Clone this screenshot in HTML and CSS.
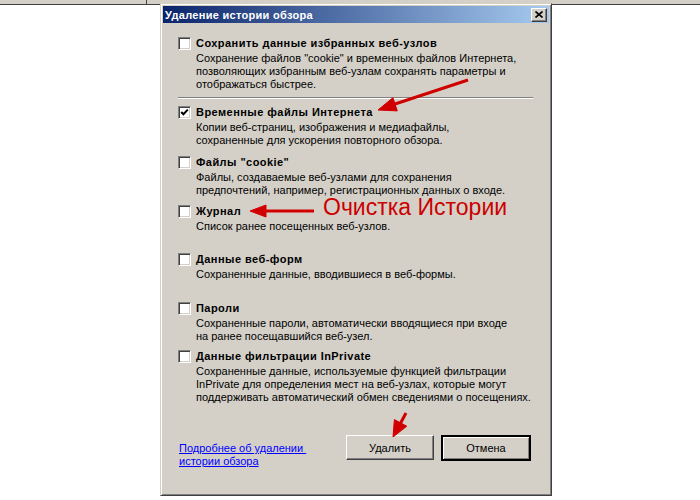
FILE: index.html
```html
<!DOCTYPE html>
<html lang="ru">
<head>
    <meta charset="UTF-8">
    <title>Удаление истории обзора</title>
    <link rel="stylesheet" href="styles.css">
</head>
<body>
    <!-- Browser frame behind the dialog -->
    <div class="topbar"><div class="topbar-cell"></div></div>

    <div class="dialog">
        <div class="titlebar">
            <span class="title">Удаление истории обзора</span>
            <span class="close-btn">
                <svg width="8" height="7" viewBox="0 0 8 7"><path d="M0.5 0.5 L7.5 6.5 M7.5 0.5 L0.5 6.5" stroke="#000" stroke-width="1.6" fill="none"/></svg>
            </span>
        </div>

        <div class="content">
            <div class="item">
                <div class="item-label"><span class="checkbox"></span><span>Сохранить данные избранных веб-узлов</span></div>
                <p class="item-desc">Сохранение файлов "cookie" и временных файлов Интернета,<br>позволяющих избранным веб-узлам сохранять параметры и<br>отображаться быстрее.</p>
            </div>

            <div class="separator"></div>

            <div class="item item-second">
                <div class="item-label"><span class="checkbox checked"><svg width="9" height="9" viewBox="0 0 9 9"><path d="M1.2 4 L3.4 6.3 L7.8 1.6" stroke="#000" stroke-width="2" fill="none"/></svg></span><span>Временные файлы Интернета</span></div>
                <p class="item-desc">Копии веб-страниц, изображения и медиафайлы,<br>сохраненные для ускорения повторного обзора.</p>
            </div>

            <div class="item item-fixed">
                <div class="item-label"><span class="checkbox"></span><span>Файлы "cookie"</span></div>
                <p class="item-desc">Файлы, создаваемые веб-узлами для сохранения<br>предпочтений, например, регистрационных данных о входе.</p>
            </div>

            <div class="item item-fixed">
                <div class="item-label"><span class="checkbox"></span><span>Журнал</span></div>
                <p class="item-desc">Список ранее посещенных веб-узлов.</p>
            </div>

            <div class="item item-fixed">
                <div class="item-label"><span class="checkbox"></span><span>Данные веб-форм</span></div>
                <p class="item-desc">Сохраненные данные, вводившиеся в веб-формы.</p>
            </div>

            <div class="item item-fixed">
                <div class="item-label"><span class="checkbox"></span><span>Пароли</span></div>
                <p class="item-desc">Сохраненные пароли, автоматически вводящиеся при входе<br>на ранее посещавшийся веб-узел.</p>
            </div>

            <div class="item">
                <div class="item-label"><span class="checkbox"></span><span>Данные фильтрации InPrivate</span></div>
                <p class="item-desc">Сохраненные данные, используемые функцией фильтрации<br>InPrivate для определения мест на веб-узлах, которые могут<br>поддерживать автоматический обмен сведениями о посещениях.</p>
            </div>
        </div>

        <div class="footer">
            <a class="help-link" href="#">Подробнее об удалении&nbsp;<br>истории обзора</a>
            <div class="buttons">
                <span class="btn">Удалить</span>
                <span class="btn btn-default">Отмена</span>
            </div>
        </div>
    </div>

    <!-- Red annotations drawn over the screenshot -->
    <svg class="annotations" width="700" height="500" viewBox="0 0 700 500">
        <g fill="#d10000" stroke="#d10000">
            <line x1="468" y1="80" x2="392" y2="105" stroke-width="3"/>
            <polygon points="378,110 397.3,110.9 392.9,97.7" stroke-width="1"/>
            <line x1="314" y1="211" x2="262" y2="211" stroke-width="3"/>
            <polygon points="250,211 266,205 266,217" stroke-width="1"/>
            <line x1="406" y1="413" x2="399" y2="426" stroke-width="3"/>
            <polygon points="393,437 406.8,426.2 394.4,419.6" stroke-width="1"/>
        </g>
    </svg>
    <div class="note">Очистка Истории</div>
</body>
</html>
```

FILE: styles.css
```css
body {
    margin: 0;
    background: #fff;
    font-family: "Liberation Sans", Arial, sans-serif;
    font-size: 11px;
    color: #000;
    position: relative;
    width: 700px;
    height: 500px;
    overflow: hidden;
}

/* Browser window behind */
.topbar {
    height: 4px;
    background: #d4d0c8;
    border-bottom: 1px solid #404040;
    display: flex;
}

.topbar-cell {
    width: 146px;
    border-right: 1px solid #404040;
}

/* Classic window */
.dialog {
    position: absolute;
    left: 160px;
    top: 3px;
    width: 392px;
    height: 493px;
    box-sizing: border-box;
    background: #d4d0c8;
    border: 1px solid;
    border-color: #d4d0c8 #404040 #404040 #d4d0c8;
    box-shadow: inset 1px 1px #fff, inset -1px -1px #808080;
    padding: 2px;
    display: flex;
    flex-direction: column;
}

.titlebar {
    height: 17px;
    background: linear-gradient(to right, #0a246a, #a6caf0);
    display: flex;
    align-items: center;
    justify-content: space-between;
    padding: 0 2px;
    color: #fff;
    font-weight: bold;
}

.title {
    letter-spacing: 0.3px;
}

.close-btn {
    width: 16px;
    height: 14px;
    box-sizing: border-box;
    background: #d4d0c8;
    border: 1px solid;
    border-color: #fff #404040 #404040 #fff;
    box-shadow: inset -1px -1px #808080;
    display: flex;
    align-items: center;
    justify-content: center;
}

.content {
    flex: 1;
    padding: 14px 16px 0 15px;
}

.item-label {
    display: flex;
    align-items: center;
    gap: 5px;
    height: 13px;
    line-height: 13px;
    font-weight: bold;
    letter-spacing: 0.45px;
}

.checkbox {
    width: 13px;
    height: 13px;
    box-sizing: border-box;
    background: #fff;
    border: 1px solid;
    border-color: #808080 #fff #fff #808080;
    box-shadow: inset 1px 1px #404040, inset -1px -1px #d4d0c8;
    display: flex;
    align-items: center;
    justify-content: center;
}

.item-desc {
    margin: 2px 0 0 18px;
    line-height: 13px;
}

.separator {
    margin-top: 6px;
    height: 1px;
    background: #808080;
    border-bottom: 1px solid #fff;
}

.item-second {
    margin-top: 7px;
    height: 50px;
}

.item-fixed {
    height: 48.5px;
}

.footer {
    display: flex;
    justify-content: space-between;
    align-items: flex-start;
    padding: 0 18px 25px 16px;
}

.help-link {
    margin-top: 7px;
    color: #0000ff;
    line-height: 13px;
}

.buttons {
    display: flex;
    gap: 7px;
}

.btn {
    width: 88px;
    height: 25px;
    box-sizing: border-box;
    background: #d4d0c8;
    border: 1px solid;
    border-color: #fff #404040 #404040 #fff;
    box-shadow: inset -1px -1px #808080;
    display: flex;
    align-items: center;
    justify-content: center;
}

.btn-default {
    width: 90px;
    height: 26px;
    border: 2px solid #000;
    box-shadow: inset 1px 1px #fff, inset -1px -1px #808080;
}

/* Annotations on top */
.annotations {
    position: absolute;
    left: 0;
    top: 0;
    pointer-events: none;
}

.note {
    position: absolute;
    left: 323px;
    top: 194px;
    font-family: "Liberation Sans", Arial, sans-serif;
    font-size: 23px;
    line-height: 26px;
    color: #cc0000;
}
```
